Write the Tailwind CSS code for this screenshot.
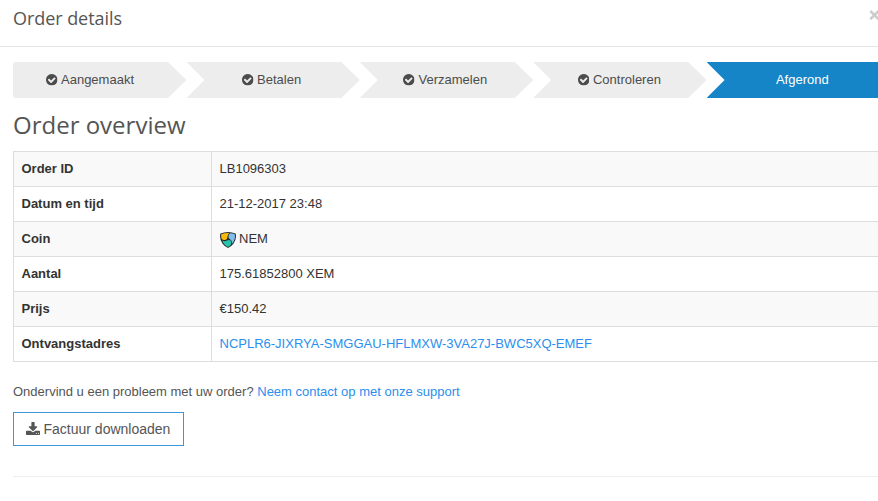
<!DOCTYPE html>
<html lang="nl">
<head>
<meta charset="utf-8">
<title>Order details</title>
<script src="https://cdn.jsdelivr.net/npm/@tailwindcss/browser@4"></script>
</head>
<body class="bg-white w-[878px] h-[501px] overflow-hidden font-['Liberation_Sans',Arial,sans-serif] text-[13px] leading-[18px] text-[#555]">
<svg class="hidden">
  <symbol id="check" viewBox="0 0 1536 1536"><path fill="currentColor" d="M1284 606q0-28-18-46l-91-90q-19-19-45-19t-45 19l-408 407-226-226q-19-19-45-19t-45 19l-91 90q-18 18-18 46 0 27 18 45l362 362q19 19 45 19 27 0 46-19l543-543q18-18 18-45zm252 162q0 209-103 385.5t-279.5 279.5-385.5 103-385.5-103-279.5-279.5-103-385.5 103-385.5 279.5-279.5 385.5-103 385.5 103 279.5 279.5 103 385.5z"/></symbol>
</svg>
<header class="flex justify-between h-[47px] border-b border-[#e5e5e5] pl-[13px]">
  <h1 class="pt-[6px] font-['Open_Sans',sans-serif] text-[18px] leading-[25px] tracking-[-0.06px]">Order details</h1>
  <button class="w-[9px] h-[30px] shrink-0 overflow-hidden text-[#ccc]" aria-label="Sluiten"><svg class="w-[10px] h-[10px] max-w-none" viewBox="0 0 10 10" stroke="currentColor" stroke-width="2.6" fill="none"><path d="M1.3 1 9.7 9.2M9.7 1 1.3 9.2"/></svg></button>
</header>
<main class="pl-[13px] pt-[15px]">
  <ol class="flex h-9 w-[870px] text-[#4c4c4c]">
    <li class="w-[173.4px] shrink-0 flex items-center pl-[33px] gap-[4px] bg-[#ededed] rounded-l-[3px] [clip-path:polygon(0_0,155px_0,100%_50%,155px_100%,0_100%)]"><svg class="size-[11.5px] -mr-[0.5px] shrink-0"><use href="#check"/></svg><span>Aangemaakt</span></li>
    <li class="w-[173.4px] shrink-0 flex items-center pl-[55.7px] gap-[4px] bg-[#ededed] [clip-path:polygon(0_0,155px_0,100%_50%,155px_100%,0_100%,18px_50%)]"><svg class="size-[11.5px] -mr-[0.5px] shrink-0"><use href="#check"/></svg><span>Betalen</span></li>
    <li class="w-[173.4px] shrink-0 flex items-center pl-[43.7px] gap-[4px] bg-[#ededed] [clip-path:polygon(0_0,155px_0,100%_50%,155px_100%,0_100%,18px_50%)]"><svg class="size-[11.5px] -mr-[0.5px] shrink-0"><use href="#check"/></svg><span>Verzamelen</span></li>
    <li class="w-[173.4px] shrink-0 flex items-center pl-[44.8px] gap-[4px] bg-[#ededed] [clip-path:polygon(0_0,155px_0,100%_50%,155px_100%,0_100%,18px_50%)]"><svg class="size-[11.5px] -mr-[0.5px] shrink-0"><use href="#check"/></svg><span>Controleren</span></li>
    <li class="grow flex items-center pl-[69.4px] bg-[#1585c8] text-white [clip-path:polygon(0_0,100%_0,100%_100%,0_100%,18px_50%)]"><span>Afgerond</span></li>
  </ol>
  <h2 class="mt-[10px] h-[43px] font-['Open_Sans',sans-serif] text-[24px] leading-[33px]">Order overview</h2>
  <table class="w-[880px] table-fixed border-collapse text-[#333] [&_tr]:h-[35px] [&_td]:border [&_th]:border [&_td]:border-[#ddd] [&_th]:border-[#ddd] [&_td]:px-[7.5px] [&_th]:px-[7.5px] [&_td]:py-0 [&_th]:py-0 [&_th]:text-left [&_tr:nth-child(odd)]:bg-[#f9f9f9]">
    <colgroup><col class="w-[198px]"><col></colgroup>
    <tbody>
      <tr><th>Order ID</th><td>LB1096303</td></tr>
      <tr><th>Datum en tijd</th><td>21-12-2017 23:48</td></tr>
      <tr><th>Coin</th><td><div class="flex items-center gap-[3.5px]"><svg class="size-4 mt-[1px]" viewBox="0 0 16 16"><path fill="#222b2d" d="M8 0Q12 0 15.6 1.6Q17 7 13.4 11.8Q11 15 8 16Q5 15 2.6 11.8Q-1 7 .4 1.6Q4 0 8 0Z"/><path fill="#f7b90b" d="M1.3 2.2Q5 .8 9.4 1.1Q7.8 2.3 7.6 4.3Q7.6 7.3 5.2 8Q2.9 8.5 1.4 6.5Q.8 4.4 1.3 2.2Z"/><path fill="#82bdec" d="M10.5 1.3Q13 1.5 14.8 2.3Q15.7 7.5 12.2 11.7Q12.5 8.7 10.3 7.4Q7.9 6.3 8.5 3.8Q8.9 2 10.5 1.3Z"/><path fill="#28c3ad" d="M2 8.2Q4.5 10.1 7 8.4Q9.3 7.2 10.9 8.8Q11.9 10.4 10.9 12.7Q9.7 14.3 8 15Q4.2 13.4 2 8.2Z"/></svg><span>NEM</span></div></td></tr>
      <tr><th>Aantal</th><td>175.61852800 XEM</td></tr>
      <tr><th>Prijs</th><td>€150.42</td></tr>
      <tr><th>Ontvangstadres</th><td><a class="text-[#2a8fee]">NCPLR6-JIXRYA-SMGGAU-HFLMXW-3VA27J-BWC5XQ-EMEF</a></td></tr>
    </tbody>
  </table>
  <p class="mt-[21px] whitespace-nowrap">Ondervind u een probleem met uw order? <a class="text-[#2a8fee]">Neem contact op met onze support</a></p>
  <button class="mt-[11px] flex items-center w-[171px] h-[34px] border border-[#3c96d8] pl-[12px] gap-[3.5px] text-[14px] leading-5"><svg class="w-[14px] h-[13px] mb-[2px] shrink-0" viewBox="0 0 1664 1536"><path fill="currentColor" d="M1280 1344q0-26-19-45t-45-19-45 19-19 45 19 45 45 19 45-19 19-45zm256 0q0-26-19-45t-45-19-45 19-19 45 19 45 45 19 45-19 19-45zm128-224v320q0 40-28 68t-68 28h-1472q-40 0-68-28t-28-68v-320q0-40 28-68t68-28h465l135 136q58 56 136 56t136-56l136-136h464q40 0 68 28t28 68zm-325-569q17 41-14 70l-448 448q-18 19-45 19t-45-19l-448-448q-31-29-14-70 17-39 59-39h256v-448q0-26 19-45t45-19h256q26 0 45 19t19 45v448h256q42 0 59 39z"/></svg><span class="whitespace-nowrap">Factuur downloaden</span></button>
  <hr class="mt-[30px] border-0 border-t border-[#eee]">
</main>
</body>
</html>
